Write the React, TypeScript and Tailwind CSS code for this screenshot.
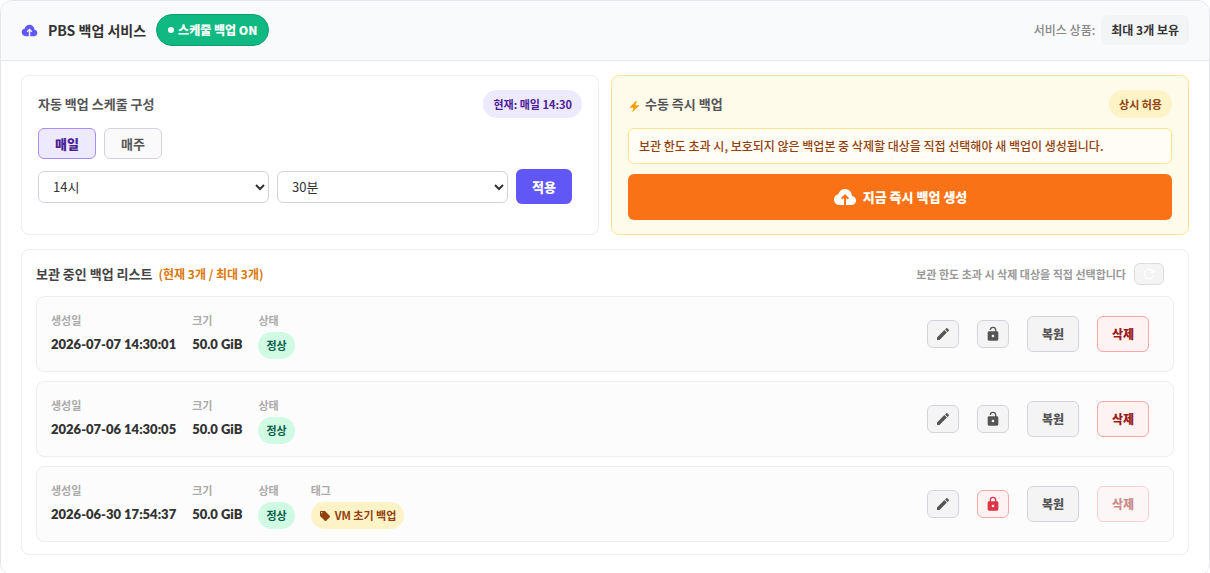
import { useState } from 'react';
import clsx from 'clsx';

const icons = {
  cloudUpload:
    'M11 20H6.5q-2.28 0-3.89-1.57Q1 16.85 1 14.58q0-1.95 1.17-3.48 1.18-1.53 3.08-1.95.63-2.3 2.5-3.72Q9.63 4 12 4q2.93 0 4.96 2.04Q19 8.07 19 11q1.73.2 2.86 1.5 1.14 1.28 1.14 3 0 1.88-1.31 3.19T18.5 20H13v-7.15l1.6 1.55L16 13l-4-4-4 4 1.4 1.4 1.6-1.55Z',
  bolt: 'M14.5 2L2.5 14.5H10L7.5 23L21.5 9.5H13.5L16.5 2Z',
  pencil:
    'M20.71 7.04C21.1 6.65 21.1 6 20.71 5.63L18.37 3.29C18 2.9 17.35 2.9 16.96 3.29L15.12 5.12L18.87 8.87M3 17.25V21H6.75L17.81 9.93L14.06 6.18L3 17.25Z',
  lock: 'M12 17A2 2 0 0 0 14 15C14 13.89 13.1 13 12 13A2 2 0 0 0 10 15A2 2 0 0 0 12 17M18 8A2 2 0 0 1 20 10V20A2 2 0 0 1 18 22H6A2 2 0 0 1 4 20V10C4 8.89 4.9 8 6 8H7V6A5 5 0 0 1 12 1A5 5 0 0 1 17 6V8H18M12 3A3 3 0 0 0 9 6V8H15V6A3 3 0 0 0 12 3Z',
  lockOpen:
    'M18 8A2 2 0 0 1 20 10V20A2 2 0 0 1 18 22H6C4.89 22 4 21.1 4 20V10A2 2 0 0 1 6 8H15V6A3 3 0 0 0 12 3A3 3 0 0 0 9 6H7A5 5 0 0 1 12 1A5 5 0 0 1 17 6V8H18M12 17A2 2 0 0 0 14 15A2 2 0 0 0 12 13A2 2 0 0 0 10 15A2 2 0 0 0 12 17Z',
  refresh:
    'M17.65 6.35C16.2 4.9 14.21 4 12 4A8 8 0 0 0 4 12A8 8 0 0 0 12 20C15.73 20 18.84 17.45 19.73 14H17.65C16.83 16.33 14.61 18 12 18A6 6 0 0 1 6 12A6 6 0 0 1 12 6C13.66 6 15.14 6.69 16.22 7.78L13 11H20V4L17.65 6.35Z',
  tag: 'M5.5 7A1.5 1.5 0 0 1 4 5.5A1.5 1.5 0 0 1 5.5 4A1.5 1.5 0 0 1 7 5.5A1.5 1.5 0 0 1 5.5 7M21.41 11.58L12.41 2.58C12.05 2.22 11.55 2 11 2H4C2.89 2 2 2.89 2 4V11C2 11.55 2.22 12.05 2.59 12.41L11.58 21.41C11.95 21.77 12.45 22 13 22C13.55 22 14.05 21.77 14.41 21.41L21.41 14.41C21.78 14.05 22 13.55 22 13C22 12.44 21.77 11.94 21.41 11.58Z',
};

const Icon = ({
  name,
  className,
}: {
  name: keyof typeof icons;
  className?: string;
}) => (
  <svg
    viewBox="0 0 24 24"
    fill="currentColor"
    aria-hidden="true"
    className={clsx('shrink-0', className)}
  >
    <path d={icons[name]} />
  </svg>
);

const backups = [
  { createdAt: '2026-07-07 14:30:01', size: '50.0 GiB', status: '정상' },
  { createdAt: '2026-07-06 14:30:05', size: '50.0 GiB', status: '정상' },
  {
    createdAt: '2026-06-30 17:54:37',
    size: '50.0 GiB',
    status: '정상',
    tag: 'VM 초기 백업',
    locked: true,
  },
];

const hours = Array.from({ length: 24 }, (_, i) => i);
const minutes = [0, 10, 20, 30, 40, 50];

const Field = ({ label, children }: { label: string; children: any }) => (
  <div>
    <dt className="text-[11px] leading-4 font-bold text-[#aaa]">{label}</dt>
    <dd className="mt-1">{children}</dd>
  </div>
);

const BackupRow = ({ backup }: { backup: any }) => {
  const { createdAt, size, status, tag, locked } = backup;
  return (
    <li className="flex h-[76px] items-center justify-between rounded-lg border border-[#eee] bg-[#fcfcfc] pr-6 pl-[14px]">
      <dl className="flex gap-4 self-start pt-[15px]">
        <Field label="생성일">
          <span className="block font-['Lato'] text-[13px] leading-6 font-extrabold text-[#333]">
            {createdAt}
          </span>
        </Field>
        <Field label="크기">
          <span className="block font-['Lato'] text-[13px] leading-6 font-extrabold text-[#333]">
            {size}
          </span>
        </Field>
        <Field label="상태">
          <span className="block rounded-full bg-[#d1fae5] px-2 text-[11px] leading-[27px] font-bold text-[#065f46]">
            {status}
          </span>
        </Field>
        {tag && (
          <Field label="태그">
            <span className="flex items-center gap-1 rounded-full bg-[#fef3c7] px-2 text-[11px] leading-[27px] font-bold text-[#92400e]">
              <Icon name="tag" className="size-3" />
              {tag}
            </span>
          </Field>
        )}
      </dl>
      <div className="flex items-center gap-[18px]">
        <button
          type="button"
          aria-label="편집"
          className="flex h-7 w-8 items-center justify-center rounded-md border border-[#d1d5db] bg-[#f4f4f5] text-[#555]"
        >
          <Icon name="pencil" className="size-4" />
        </button>
        <button
          type="button"
          aria-label={locked ? '보호 해제' : '보호'}
          className={clsx(
            'flex h-7 w-8 items-center justify-center rounded-md border',
            locked
              ? 'border-[#fca5a5] bg-[#fef2f2] text-[#dc3545]'
              : 'border-[#d1d5db] bg-[#f4f4f5] text-[#555]'
          )}
        >
          <Icon name={locked ? 'lock' : 'lockOpen'} className="size-4" />
        </button>
        <button
          type="button"
          className="h-9 w-[52px] rounded-md border border-[#d1d5db] bg-[#f4f4f5] text-xs font-black text-[#555]"
        >
          복원
        </button>
        <button
          type="button"
          disabled={locked}
          className="h-9 w-[52px] rounded-md border border-[#fca5a5] bg-[#fef2f2] text-xs font-black text-[#991b1b] disabled:opacity-50"
        >
          삭제
        </button>
      </div>
    </li>
  );
};

const App = () => {
  const [cycle, setCycle] = useState('daily');
  const [hour, setHour] = useState(14);
  const [minute, setMinute] = useState(30);

  return (
    <div className="h-screen overflow-hidden bg-white font-['Noto_Sans_CJK_KR',sans-serif] text-[#333]">
      <main className="rounded-xl border border-[#e5e7eb]">
        <header className="flex items-center justify-between rounded-t-xl border-b border-[#e5e7eb] bg-[#f9fafb] px-5 pt-[13px] pb-[14px]">
          <div className="flex items-center gap-[10px]">
            <Icon name="cloudUpload" className="size-[17px] text-[#6157f7]" />
            <h1 className="text-sm font-bold">PBS 백업 서비스</h1>
            <button
              type="button"
              className="flex h-8 items-center gap-1 rounded-full border border-[#0f9f6e] bg-[#10b981] px-[11px] text-xs font-black text-white"
            >
              <span className="size-[6px] rounded-full bg-white" />
              스케줄 백업 ON
            </button>
          </div>
          <div className="flex items-center gap-[6px] text-xs">
            <span className="font-medium text-[#888]">서비스 상품:</span>
            <span className="rounded-md bg-[#f3f4f6] px-[10px] leading-[30px] font-bold">
              최대 3개 보유
            </span>
          </div>
        </header>

        <div className="flex flex-col gap-[14px] px-5 pt-[14px] pb-5">
          <div className="grid grid-cols-2 gap-3">
            <section className="h-40 rounded-lg border border-[#eee] px-4 pt-[14px]">
              <div className="flex h-7 items-center justify-between">
                <h2 className="text-[13px] font-bold text-[#555]">
                  자동 백업 스케줄 구성
                </h2>
                <span className="rounded-full bg-[#ede9fe] px-[10px] text-[11px] leading-7 font-bold text-[#4c1d95]">
                  현재: 매일 14:30
                </span>
              </div>
              <div className="mt-[10px] flex gap-2 text-[13px]">
                <button
                  type="button"
                  onClick={() => setCycle('daily')}
                  className={clsx(
                    'h-[31px] rounded-md border px-4',
                    cycle === 'daily'
                      ? 'border-[#a78bfa] bg-[#ede9fe] font-black text-[#4c1d95]'
                      : 'border-[#d1d5db] bg-[#fafafa] font-bold text-[#555]'
                  )}
                >
                  매일
                </button>
                <button
                  type="button"
                  onClick={() => setCycle('weekly')}
                  className={clsx(
                    'h-[31px] rounded-md border px-4',
                    cycle === 'weekly'
                      ? 'border-[#a78bfa] bg-[#ede9fe] font-black text-[#4c1d95]'
                      : 'border-[#d1d5db] bg-[#fafafa] font-bold text-[#555]'
                  )}
                >
                  매주
                </button>
              </div>
              <div className="mt-[10px] flex items-center gap-2 pr-[10px]">
                <select
                  aria-label="시"
                  value={hour}
                  onChange={(e) => setHour(Number(e.target.value))}
                  className="h-8 min-w-0 flex-1 rounded-md border border-[#d1d5db] bg-white pl-[10px] text-[13px]"
                >
                  {hours.map((h) => (
                    <option key={h} value={h}>
                      {h}시
                    </option>
                  ))}
                </select>
                <select
                  aria-label="분"
                  value={minute}
                  onChange={(e) => setMinute(Number(e.target.value))}
                  className="h-8 min-w-0 flex-1 rounded-md border border-[#d1d5db] bg-white pl-[10px] text-[13px]"
                >
                  {minutes.map((m) => (
                    <option key={m} value={m}>
                      {m}분
                    </option>
                  ))}
                </select>
                <button
                  type="button"
                  className="h-[35px] w-14 rounded-md bg-[#6157f7] text-[13px] font-black text-white"
                >
                  적용
                </button>
              </div>
            </section>

            <section className="h-40 rounded-lg border border-[#fde68a] bg-[#fffbeb] px-4 pt-[14px]">
              <div className="flex h-7 items-center justify-between">
                <h2 className="flex items-center gap-1 text-[13px] font-bold text-[#555]">
                  <Icon name="bolt" className="mt-1 size-[13px] text-[#f59e0b]" />
                  수동 즉시 백업
                </h2>
                <span className="rounded-full bg-[#fef3c7] px-[10px] text-[11px] leading-7 font-bold text-[#92400e]">
                  상시 허용
                </span>
              </div>
              <p className="mt-[10px] rounded-md border border-[#fde68a] bg-[#fffdf5] px-[10px] text-xs leading-[34px] font-medium text-[#92400e]">
                보관 한도 초과 시, 보호되지 않은 백업본 중 삭제할 대상을 직접
                선택해야 새 백업이 생성됩니다.
              </p>
              <button
                type="button"
                className="mt-[10px] flex h-[46px] w-full items-center justify-center gap-[6px] rounded-md bg-[#f97316] text-[13px] font-black text-white"
              >
                <Icon name="cloudUpload" className="size-6" />
                지금 즉시 백업 생성
              </button>
            </section>
          </div>

          <section className="rounded-lg border border-[#eee] px-[14px] pt-3 pb-3">
            <div className="flex h-6 items-center justify-between pr-[10px]">
              <h2 className="text-[13px] font-bold text-[#444]">
                보관 중인 백업 리스트
                <span className="ml-[6px] text-xs font-bold text-[#d97706]">
                  (현재 3개 / 최대 3개)
                </span>
              </h2>
              <div className="flex items-center gap-2">
                <span className="text-[11px] font-bold text-[#999]">
                  보관 한도 초과 시 삭제 대상을 직접 선택합니다
                </span>
                <button
                  type="button"
                  aria-label="새로고침"
                  className="flex h-[22px] w-[30px] items-center justify-center rounded-md border border-[#ddd] bg-[#f4f4f4] text-white"
                >
                  <Icon name="refresh" className="size-4" />
                </button>
              </div>
            </div>
            <ul className="mt-[10px] flex flex-col gap-[9px]">
              {backups.map((backup) => (
                <BackupRow key={backup.createdAt} backup={backup} />
              ))}
            </ul>
          </section>
        </div>
      </main>
    </div>
  );
};

export default App;
